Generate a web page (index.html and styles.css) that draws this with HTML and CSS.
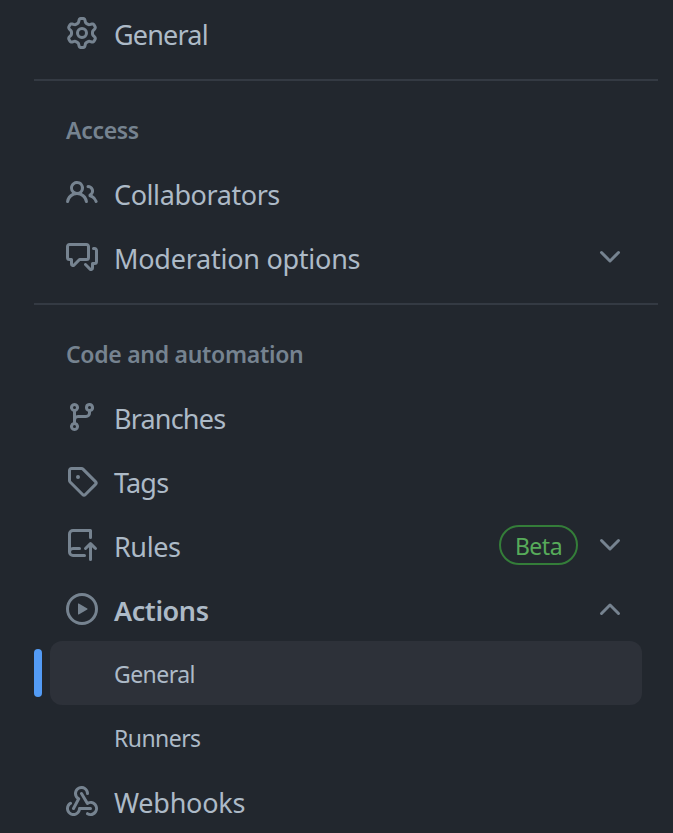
FILE: index.html
```html
<!DOCTYPE html>
<html lang="en">
<head>
<meta charset="utf-8">
<title>Settings</title>
<link rel="stylesheet" href="styles.css">
</head>
<body>
<nav class="sidebar">
  <ul class="list">
    <li class="item">
      <svg class="icon" viewBox="0 0 16 16"><path d="M8 0a8.2 8.2 0 0 1 .701.031C9.444.095 9.99.645 10.16 1.29l.288 1.107c.018.066.079.158.212.224.231.114.454.243.668.386.123.082.233.09.299.071l1.103-.303c.644-.176 1.392.021 1.82.63.27.385.506.792.704 1.218.315.675.111 1.422-.364 1.891l-.814.806c-.049.048-.098.147-.088.294.016.257.016.515 0 .772-.01.147.038.246.088.294l.814.806c.475.469.679 1.216.364 1.891a7.977 7.977 0 0 1-.704 1.217c-.428.61-1.176.807-1.82.63l-1.102-.302c-.067-.019-.177-.011-.3.071a5.909 5.909 0 0 1-.668.386c-.133.066-.194.158-.211.224l-.29 1.106c-.168.646-.715 1.196-1.458 1.26a8.006 8.006 0 0 1-1.402 0c-.743-.064-1.289-.614-1.458-1.26l-.289-1.106c-.018-.066-.079-.158-.212-.224a5.738 5.738 0 0 1-.668-.386c-.123-.082-.233-.09-.299-.071l-1.103.303c-.644.176-1.392-.021-1.82-.63a8.12 8.12 0 0 1-.704-1.218c-.315-.675-.111-1.422.363-1.891l.815-.806c.05-.048.098-.147.088-.294a6.214 6.214 0 0 1 0-.772c.01-.147-.038-.246-.088-.294l-.815-.806C.635 6.045.431 5.298.746 4.623a7.92 7.92 0 0 1 .704-1.217c.428-.61 1.176-.807 1.82-.63l1.102.302c.067.019.177.011.3-.071.214-.143.437-.272.668-.386.133-.066.194-.158.211-.224l.29-1.106C6.009.645 6.556.095 7.299.03 7.53.01 7.764 0 8 0Zm-.571 1.525c-.036.003-.108.036-.137.146l-.289 1.105c-.147.561-.549.967-.998 1.189-.173.086-.34.183-.5.29-.417.278-.97.423-1.529.27l-1.103-.303c-.109-.03-.175.016-.195.045-.22.312-.412.644-.573.99-.014.031-.021.11.059.19l.815.806c.411.406.562.957.53 1.456a4.709 4.709 0 0 0 0 .582c.032.499-.119 1.05-.53 1.456l-.815.806c-.081.08-.073.159-.059.19.162.346.353.677.573.989.02.03.085.076.195.046l1.102-.303c.56-.153 1.113-.008 1.53.27.161.107.328.204.501.29.447.222.85.629.997 1.189l.289 1.105c.029.109.101.143.137.146a6.6 6.6 0 0 0 1.142 0c.036-.003.108-.036.137-.146l.289-1.105c.147-.561.549-.967.998-1.189.173-.086.34-.183.5-.29.417-.278.97-.423 1.529-.27l1.103.303c.109.029.175-.016.195-.045.22-.313.411-.644.573-.99.014-.031.021-.11-.059-.19l-.815-.806c-.411-.406-.562-.957-.53-1.456a4.709 4.709 0 0 0 0-.582c-.032-.499.119-1.05.53-1.456l.815-.806c.081-.08.073-.159.059-.19a6.464 6.464 0 0 0-.573-.989c-.02-.03-.085-.076-.195-.046l-1.102.303c-.56.153-1.113.008-1.53-.27a4.44 4.44 0 0 0-.501-.29c-.447-.222-.85-.629-.997-1.189l-.289-1.105c-.029-.11-.101-.143-.137-.146a6.6 6.6 0 0 0-1.142 0ZM11 8a3 3 0 1 1-6 0 3 3 0 0 1 6 0ZM9.5 8a1.5 1.5 0 1 0-3.001.001A1.5 1.5 0 0 0 9.5 8Z"/></svg>
      <span class="label label-tight">General</span>
    </li>
  </ul>

  <hr class="divider">
  <h3 class="heading">Access</h3>
  <ul class="list">
    <li class="item">
      <svg class="icon" viewBox="0 0 16 16"><path d="M2 5.5a3.5 3.5 0 1 1 5.898 2.549 5.508 5.508 0 0 1 3.034 4.084.75.75 0 1 1-1.482.235 4 4 0 0 0-7.9 0 .75.75 0 0 1-1.482-.236A5.507 5.507 0 0 1 3.102 8.05 3.493 3.493 0 0 1 2 5.5ZM11 4a3.001 3.001 0 0 1 2.22 5.018 5.01 5.01 0 0 1 2.56 3.012.749.749 0 0 1-.885.954.752.752 0 0 1-.549-.514 3.507 3.507 0 0 0-2.522-2.372.75.75 0 0 1-.574-.73v-.352a.75.75 0 0 1 .416-.672A1.5 1.5 0 0 0 11 5.5.75.75 0 0 1 11 4Zm-5.5-.5a2 2 0 1 0-.001 3.999A2 2 0 0 0 5.5 3.5Z"/></svg>
      <span class="label label-snug">Collaborators</span>
    </li>
    <li class="item">
      <svg class="icon" viewBox="0 0 16 16"><path d="M1.75 1h8.5c.966 0 1.75.784 1.75 1.75v5.5A1.75 1.75 0 0 1 10.25 10H7.061l-2.574 2.573A1.458 1.458 0 0 1 2 11.543V10h-.25A1.75 1.75 0 0 1 0 8.25v-5.5C0 1.784.784 1 1.75 1ZM1.5 2.75v5.5c0 .138.112.25.25.25h1a.75.75 0 0 1 .75.75v2.19l2.72-2.72a.749.749 0 0 1 .53-.22h3.5a.25.25 0 0 0 .25-.25v-5.5a.25.25 0 0 0-.25-.25h-8.5a.25.25 0 0 0-.25.25Zm13 2a.25.25 0 0 0-.25-.25h-.5a.75.75 0 0 1 0-1.5h.5c.966 0 1.75.784 1.75 1.75v5.5A1.75 1.75 0 0 1 14.25 12H14v1.543a1.458 1.458 0 0 1-2.487 1.03L9.22 12.28a.749.749 0 0 1 .326-1.275.749.749 0 0 1 .734.215l2.22 2.22v-2.19a.75.75 0 0 1 .75-.75h1a.25.25 0 0 0 .25-.25Z"/></svg>
      <span class="label">Moderation options</span>
      <svg class="icon" viewBox="0 0 16 16"><path d="M12.78 5.22a.749.749 0 0 1 0 1.06l-4.25 4.25a.749.749 0 0 1-1.06 0L3.22 6.28a.749.749 0 1 1 1.06-1.06L8 8.939l3.72-3.719a.749.749 0 0 1 1.06 0Z"/></svg>
    </li>
  </ul>

  <hr class="divider">
  <h3 class="heading">Code and automation</h3>
  <ul class="list">
    <li class="item">
      <svg class="icon" viewBox="0 0 16 16"><path d="M9.5 3.25a2.25 2.25 0 1 1 3 2.122V6A2.5 2.5 0 0 1 10 8.5H6a1 1 0 0 0-1 1v1.128a2.251 2.251 0 1 1-1.5 0V5.372a2.25 2.25 0 1 1 1.5 0v1.836A2.493 2.493 0 0 1 6 7h4a1 1 0 0 0 1-1v-.628A2.25 2.25 0 0 1 9.5 3.25Zm-6 0a.75.75 0 1 0 1.5 0 .75.75 0 0 0-1.5 0Zm8.25-.75a.75.75 0 1 0 0 1.5.75.75 0 0 0 0-1.5ZM4.25 12a.75.75 0 1 0 0 1.5.75.75 0 0 0 0-1.5Z"/></svg>
      <span class="label label-tight">Branches</span>
    </li>
    <li class="item">
      <svg class="icon" viewBox="0 0 16 16"><path d="M1 7.775V2.75C1 1.784 1.784 1 2.75 1h5.025c.464 0 .91.184 1.238.513l6.25 6.25a1.75 1.75 0 0 1 0 2.474l-5.026 5.026a1.75 1.75 0 0 1-2.474 0l-6.25-6.25A1.752 1.752 0 0 1 1 7.775Zm1.5 0c0 .066.026.13.073.177l6.25 6.25a.25.25 0 0 0 .354 0l5.025-5.025a.25.25 0 0 0 0-.354l-6.25-6.25a.25.25 0 0 0-.177-.073H2.75a.25.25 0 0 0-.25.25ZM6 5a1 1 0 1 1 0 2 1 1 0 0 1 0-2Z"/></svg>
      <span class="label label-tight">Tags</span>
    </li>
    <li class="item">
      <svg class="icon" viewBox="0 0 16 16"><path d="M1 2.5A2.5 2.5 0 0 1 3.5 0h8.75a.75.75 0 0 1 .75.75v3.5a.75.75 0 0 1-1.5 0V1.5h-8a1 1 0 0 0-1 1v6.708A2.493 2.493 0 0 1 3.5 9h3.25a.75.75 0 0 1 0 1.5H3.5a1 1 0 0 0 0 2h5.75a.75.75 0 0 1 0 1.5H3.5A2.5 2.5 0 0 1 1 11.5Zm13.23 7.79-1.224-1.224v6.184a.75.75 0 0 1-1.5 0V9.066L10.28 10.29a.75.75 0 0 1-1.06-1.061l2.505-2.504a.75.75 0 0 1 1.06 0L15.29 9.23a.751.751 0 0 1-.018 1.042.751.751 0 0 1-1.042.018Z"/></svg>
      <span class="label label-snug">Rules</span>
      <span class="badge">Beta</span>
      <svg class="icon" viewBox="0 0 16 16"><path d="M12.78 5.22a.749.749 0 0 1 0 1.06l-4.25 4.25a.749.749 0 0 1-1.06 0L3.22 6.28a.749.749 0 1 1 1.06-1.06L8 8.939l3.72-3.719a.749.749 0 0 1 1.06 0Z"/></svg>
    </li>
    <li class="item">
      <svg class="icon" viewBox="0 0 16 16"><path d="M8 0a8 8 0 1 1 0 16A8 8 0 0 1 8 0ZM1.5 8a6.5 6.5 0 1 0 13 0 6.5 6.5 0 0 0-13 0Zm4.879-2.773 4.264 2.559a.25.25 0 0 1 0 .428l-4.264 2.559A.25.25 0 0 1 6 10.559V5.442a.25.25 0 0 1 .379-.215Z"/></svg>
      <span class="label label-snug label-open">Actions</span>
      <svg class="icon icon-flipped" viewBox="0 0 16 16"><path d="M12.78 5.22a.749.749 0 0 1 0 1.06l-4.25 4.25a.749.749 0 0 1-1.06 0L3.22 6.28a.749.749 0 1 1 1.06-1.06L8 8.939l3.72-3.719a.749.749 0 0 1 1.06 0Z"/></svg>
    </li>
    <li class="item subitem current"><span class="label">General</span></li>
    <li class="item subitem"><span class="label">Runners</span></li>
    <li class="item">
      <svg class="icon" viewBox="0 0 16 16"><path d="M5.5 4.25a2.25 2.25 0 0 1 4.5 0 .75.75 0 0 0 1.5 0 3.75 3.75 0 1 0-6.14 2.889l-2.272 4.258a.75.75 0 0 0 1.324.706L7 7.25a.75.75 0 0 0-.309-1.015A2.25 2.25 0 0 1 5.5 4.25Z"/><path d="M7.364 3.607a.75.75 0 0 1 1.03.257l2.608 4.349a3.75 3.75 0 1 1-.628 6.785.75.75 0 0 1 .752-1.299 2.25 2.25 0 1 0-.033-3.88.75.75 0 0 1-1.03-.256L7.107 4.636a.75.75 0 0 1 .257-1.03Z"/><path d="M2.9 8.776A.75.75 0 0 1 2.625 9.8 2.25 2.25 0 1 0 6 11.75a.75.75 0 0 1 .75-.751h5.5a.75.75 0 0 1 0 1.5H7.425a3.751 3.751 0 1 1-5.55-3.998.75.75 0 0 1 1.024.274Z"/></svg>
      <span class="label">Webhooks</span>
    </li>
  </ul>
</nav>
</body>
</html>
```
FILE: styles.css
```css
* { box-sizing: border-box; }

body {
  margin: 0;
  background: #22272e;
  color: #adbac7;
  font-family: "Noto Sans", "Open Sans", sans-serif;
}

.sidebar {
  padding: 1px 15px 0 34px;
}

.list {
  list-style: none;
  margin: 0;
  padding: 0 16px;
}

.item {
  position: relative;
  display: flex;
  align-items: center;
  gap: 16px;
  height: 64px;
  padding: 0 16px;
  border-radius: 12px;
  font-size: 27px;
  letter-spacing: -0.25px;
  line-height: 40px;
}

.icon {
  flex: none;
  width: 32px;
  height: 32px;
  fill: #768390;
}

.icon-flipped { transform: rotate(180deg); }

.label {
  flex: 1;
  padding-top: 4px;
  white-space: nowrap;
}

.label-snug { letter-spacing: -0.42px; }

.label-tight { letter-spacing: -0.82px; }

.label-open { font-weight: 600; }

.subitem {
  padding-left: 64px;
  font-size: 23px;
  letter-spacing: -0.55px;
}

.subitem .label { padding-top: 1px; }

.current { background: #2d3139; }

.current::before {
  content: "";
  position: absolute;
  left: -16px;
  top: 8px;
  width: 8px;
  height: 48px;
  border-radius: 4px;
  background: #539bf5;
}

.divider {
  height: 2px;
  margin: 14px 0 0;
  border: 0;
  background: #343a43;
}

.heading {
  height: 80px;
  margin: 0;
  padding: 1px 32px 0;
  color: #768390;
  font-size: 23px;
  font-weight: 600;
  letter-spacing: -0.3px;
  line-height: 96px;
}

.badge {
  width: 79px;
  height: 40px;
  border: 2px solid #347d39;
  border-radius: 20px;
  color: #57ab5a;
  font-size: 23px;
  letter-spacing: -0.5px;
  line-height: 38px;
  text-align: center;
}
```
